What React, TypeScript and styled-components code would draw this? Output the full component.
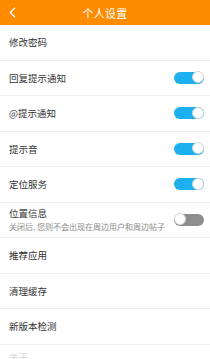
import React, { useState } from 'react';
import styled, { createGlobalStyle, css } from 'styled-components';

const GlobalStyle = createGlobalStyle`
    html, body {
        margin: 0;
        padding: 0;
        background: #fff;
        font-family: "Noto Sans CJK SC", "Noto Sans", sans-serif;
    }
`;

interface ISwitch {
    on: boolean
}

type setting = { label: string, sub?: string, toggle?: boolean, faded?: boolean }

const Page = styled.div`
    width: 210px;
    height: 359px;
    overflow: hidden;
    display: flex;
    flex-direction: column;
    background: #fff;
`;

const Header = styled.div`
    height: 25px;
    flex-shrink: 0;
    background-color: #ff8c00;
    display: flex;
    align-items: center;
    justify-content: center;
    position: relative;
`;

const Back = styled.span`
    position: absolute;
    left: 9px;
    top: 7px;
    display: flex;
`;

const Title = styled.div`
    color: #fff;
    font-size: 11px;
    letter-spacing: 0.3px;
`;

const List = styled.ul`
    margin: 0;
    padding: 0;
    list-style: none;
`;

const Row = styled.li<{ faded?: boolean }>`
    height: 34.5px;
    border-bottom: 1px solid #efefef;
    padding: 0 6px 0 9px;
    display: flex;
    align-items: center;
    justify-content: space-between;
    color: #333;
    ${({ faded }) => faded && css`
        color: #d8d8d8;
        border-bottom: none;
        align-items: flex-start;
        padding-top: 6px;
    `}
`;

const TextBox = styled.div`
    display: flex;
    flex-direction: column;
    gap: 3px;
`;

const Label = styled.div`
    font-size: 9.5px;
    line-height: 12px;
`;

const Sub = styled.div`
    font-size: 8px;
    line-height: 10px;
    color: #8a8a8a;
`;

const Track = styled.button<ISwitch>`
    width: 30px;
    height: 12px;
    border: none;
    padding: 0;
    border-radius: 6px;
    position: relative;
    cursor: pointer;
    background-color: ${({ on }) => on ? '#1cb1ee' : '#8e8e8e'};
`;

const Knob = styled.span<ISwitch>`
    position: absolute;
    top: -0.5px;
    width: 12px;
    height: 12px;
    border-radius: 50%;
    background: #fff;
    border: 0.5px solid #d6d6d6;
    box-sizing: border-box;
    left: ${({ on }) => on ? '18px' : '0'};
`;

const Toggle = ({ initial }: { initial: boolean }) => {
    const [on, setOn] = useState(initial)
    return <Track on={on} onClick={() => setOn(!on)}><Knob on={on} /></Track>
}

const settings: setting[] = [
    { label: '修改密码' },
    { label: '回复提示通知', toggle: true },
    { label: '@提示通知', toggle: true },
    { label: '提示音', toggle: true },
    { label: '定位服务', toggle: true },
    { label: '位置信息', sub: '关闭后, 您则不会出现在周边用户和周边帖子', toggle: false },
    { label: '推荐应用' },
    { label: '清理缓存' },
    { label: '新版本检测' },
    { label: '关于', faded: true },
]

const App = () => {
    return <Page>
        <GlobalStyle />
        <Header>
            <Back>
                <svg width="7" height="11" viewBox="0 0 7 11">
                    <path d="M6 0.8 L1.3 5.5 L6 10.2" fill="none" stroke="#fff" strokeWidth="1.3" />
                </svg>
            </Back>
            <Title>个人设置</Title>
        </Header>
        <List>
            {settings.map(({ label, sub, toggle, faded }) => {
                return <Row key={label} faded={faded}>
                    <TextBox>
                        <Label>{label}</Label>
                        {sub && <Sub>{sub}</Sub>}
                    </TextBox>
                    {toggle !== undefined && <Toggle initial={toggle} />}
                </Row>
            })}
        </List>
    </Page>
}

export default App;
